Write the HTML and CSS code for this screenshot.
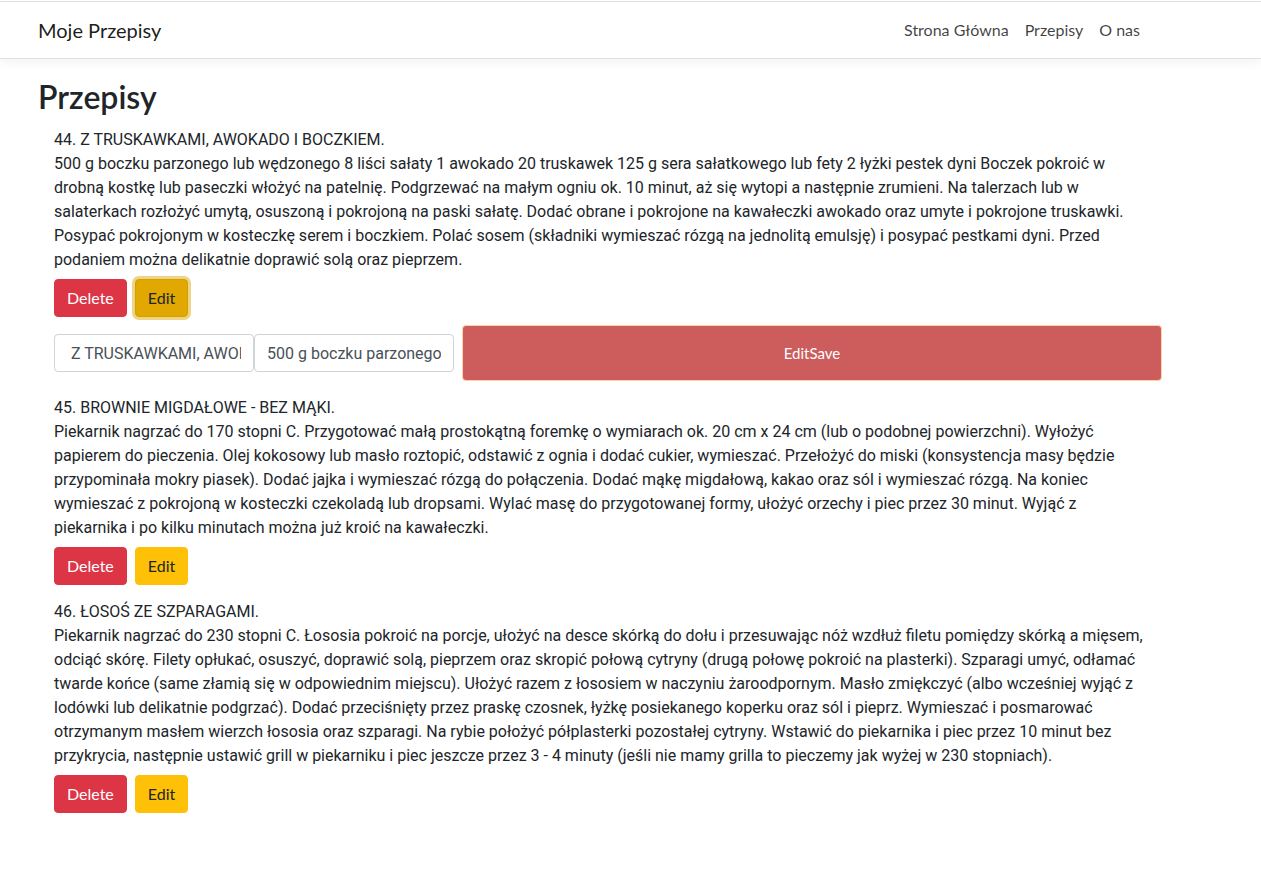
FILE: index.html
```html
<!DOCTYPE html>
<html lang="pl">
<head>
<meta charset="utf-8">
<title>Moje Przepisy</title>
<link rel="stylesheet" href="styles.css">
</head>
<body>
<nav class="navbar">
  <a class="brand" href="#">Moje Przepisy</a>
  <ul class="nav-links">
    <li><a href="#">Strona Główna</a></li>
    <li><a href="#">Przepisy</a></li>
    <li><a href="#">O nas</a></li>
  </ul>
</nav>
<main class="page">
  <h1 class="page-title">Przepisy</h1>
  <div class="recipe">
    <div class="recipe-body">
      <div class="recipe-title">44. Z TRUSKAWKAMI, AWOKADO I BOCZKIEM.</div>
      <div class="recipe-text">500 g boczku parzonego lub wędzonego 8 liści sałaty 1 awokado 20 truskawek 125 g sera sałatkowego lub fety 2 łyżki pestek dyni Boczek pokroić w drobną kostkę lub paseczki włożyć na patelnię. Podgrzewać na małym ogniu ok. 10 minut, aż się wytopi a następnie zrumieni. Na talerzach lub w salaterkach rozłożyć umytą, osuszoną i pokrojoną na paski sałatę. Dodać obrane i pokrojone na kawałeczki awokado oraz umyte i pokrojone truskawki. Posypać pokrojonym w kosteczkę serem i boczkiem. Polać sosem (składniki wymieszać rózgą na jednolitą emulsję) i posypać pestkami dyni. Przed podaniem można delikatnie doprawić solą oraz pieprzem.</div>
    </div>
    <div class="actions">
      <button class="btn btn-danger">Delete</button>
      <button class="btn btn-warning btn-active">Edit</button>
    </div>
    <div class="edit-row">
      <input class="field" type="text" value=" Z TRUSKAWKAMI, AWOKADO I BOCZKIEM.">
      <input class="field" type="text" value="500 g boczku parzonego lub wędzonego">
      <button class="btn-save">EditSave</button>
    </div>
  </div>
  <div class="recipe">
    <div class="recipe-body">
      <div class="recipe-title">45. BROWNIE MIGDAŁOWE - BEZ MĄKI.</div>
      <div class="recipe-text">Piekarnik nagrzać do 170 stopni C. Przygotować małą prostokątną foremkę o wymiarach ok. 20 cm x 24 cm (lub o podobnej powierzchni). Wyłożyć papierem do pieczenia. Olej kokosowy lub masło roztopić, odstawić z ognia i dodać cukier, wymieszać. Przełożyć do miski (konsystencja masy będzie przypominała mokry piasek). Dodać jajka i wymieszać rózgą do połączenia. Dodać mąkę migdałową, kakao oraz sól i wymieszać rózgą. Na koniec wymieszać z pokrojoną w kosteczki czekoladą lub dropsami. Wylać masę do przygotowanej formy, ułożyć orzechy i piec przez 30 minut. Wyjąć z piekarnika i po kilku minutach można już kroić na kawałeczki.</div>
    </div>
    <div class="actions">
      <button class="btn btn-danger">Delete</button>
      <button class="btn btn-warning">Edit</button>
    </div>
  </div>
  <div class="recipe">
    <div class="recipe-body">
      <div class="recipe-title">46. ŁOSOŚ ZE SZPARAGAMI.</div>
      <div class="recipe-text">Piekarnik nagrzać do 230 stopni C. Łososia pokroić na porcje, ułożyć na desce skórką do dołu i przesuwając nóż wzdłuż filetu pomiędzy skórką a mięsem, odciąć skórę. Filety opłukać, osuszyć, doprawić solą, pieprzem oraz skropić połową cytryny (drugą połowę pokroić na plasterki). Szparagi umyć, odłamać twarde końce (same złamią się w odpowiednim miejscu). Ułożyć razem z łososiem w naczyniu żaroodpornym. Masło zmiękczyć (albo wcześniej wyjąć z lodówki lub delikatnie podgrzać). Dodać przeciśnięty przez praskę czosnek, łyżkę posiekanego koperku oraz sól i pieprz. Wymieszać i posmarować otrzymanym masłem wierzch łososia oraz szparagi. Na rybie położyć półplasterki pozostałej cytryny. Wstawić do piekarnika i piec przez 10 minut bez przykrycia, następnie ustawić grill w piekarniku i piec jeszcze przez 3 - 4 minuty (jeśli nie mamy grilla to pieczemy jak wyżej w 230 stopniach).</div>
    </div>
    <div class="actions">
      <button class="btn btn-danger">Delete</button>
      <button class="btn btn-warning">Edit</button>
    </div>
  </div>
</main>
</body>
</html>
```
FILE: styles.css
```css
* { box-sizing: border-box; }
html, body { margin: 0; padding: 0; }
body {
  font-family: Roboto, "Noto Sans", sans-serif;
  font-size: 16px;
  line-height: 24px;
  color: #212529;
  background: #fff;
}
.navbar {
  margin-top: 1px;
  border-top: 1px solid #dee2e6;
  border-bottom: 1px solid #dee2e6;
  box-shadow: 0 4px 10px rgba(0,0,0,0.05);
  height: 58px;
  padding: 8px 113px 8px 38px;
  display: flex;
  align-items: center;
  justify-content: space-between;
}
.brand {
  font-family: Lato, sans-serif;
  font-size: 20px;
  line-height: 30px;
  color: rgba(0,0,0,0.9);
  text-decoration: none;
}
.nav-links {
  list-style: none;
  margin: 0;
  padding: 0;
  display: flex;
  font-family: Lato, sans-serif;
}
.nav-links a {
  display: block;
  padding: 8px;
  color: rgba(0,0,0,0.75);
  text-decoration: none;
}
.page-title {
  font-family: Lato, sans-serif;
  font-size: 32px;
  font-weight: 600;
  line-height: 38px;
  margin: 19px 0 12px 38px;
}
.recipe {
  margin: 0 0 15px 54px;
  width: 1108px;
}
.recipe-body {
  width: 1096px;
}
.actions {
  margin-top: 7px;
  display: flex;
  gap: 8px;
}
.btn {
  font-family: Lato, sans-serif;
  font-size: 16px;
  line-height: 24px;
  padding: 6px 12px;
  border: 1px solid transparent;
  border-radius: 4px;
  cursor: pointer;
}
.btn-danger { background: #dc3545; border-color: #dc3545; color: #fff; }
.btn-warning { background: #ffc107; border-color: #ffc107; color: #212529; }
.btn-active {
  background: #e0a800;
  border-color: #d39e00;
  box-shadow: 0 0 0 3px rgba(222,170,12,0.5);
}
.edit-row {
  margin-top: 8px;
  display: flex;
  align-items: center;
}
.field {
  width: 200px;
  height: 38px;
  padding: 6px 12px;
  font-family: inherit;
  font-size: 16px;
  color: #495057;
  border: 1px solid #ced4da;
  border-radius: 4px;
  background: #fff;
}
.btn-save {
  margin-left: 8px;
  width: 700px;
  height: 56px;
  background: #cd5c5c;
  border: 1px solid #ffd3a8;
  border-radius: 4px;
  color: #fff;
  font-family: Lato, sans-serif;
  font-size: 15px;
}
```
